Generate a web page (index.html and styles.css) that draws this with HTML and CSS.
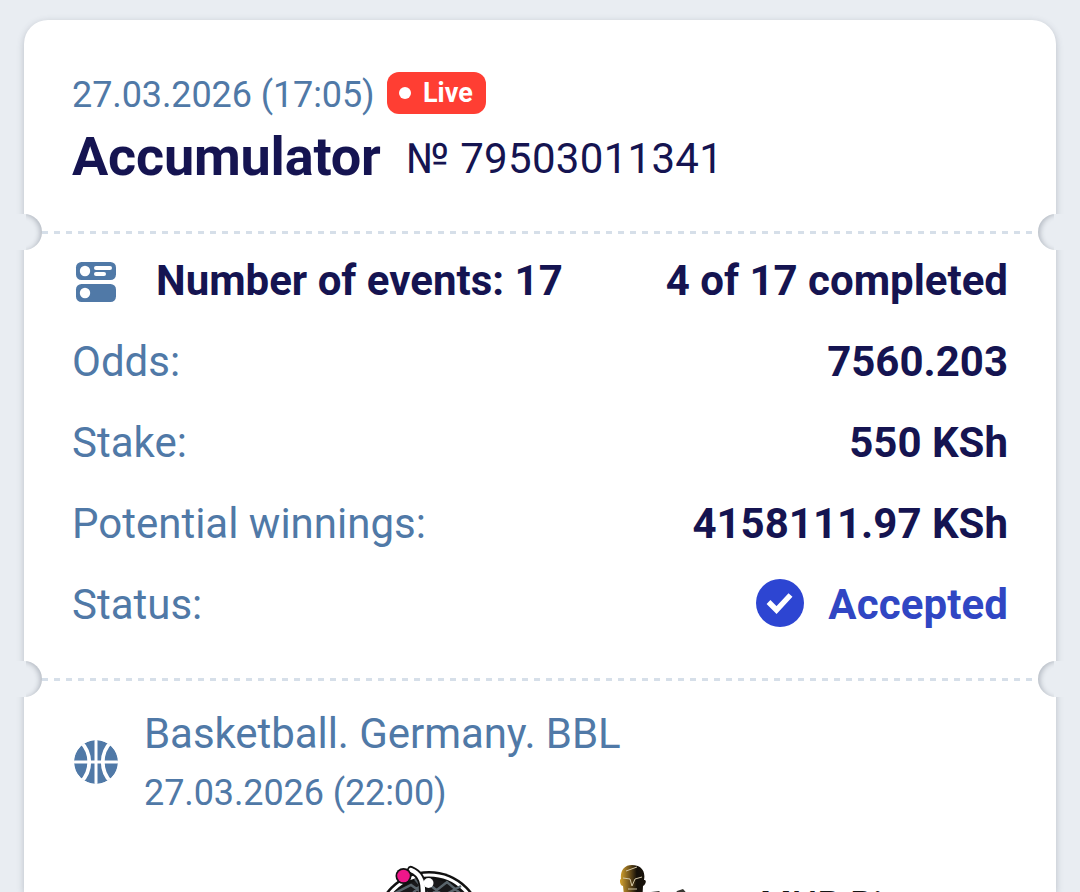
FILE: index.html
```html
<!DOCTYPE html>
<html lang="en">
<head>
<meta charset="utf-8">
<title>Bet slip</title>
<link rel="stylesheet" href="styles.css">
</head>
<body>
<main class="ticket">
  <header class="head">
    <div class="head-meta">
      <span class="date">27.03.2026 (17:05)</span>
      <span class="live"><i class="live-dot"></i><span class="live-text">Live</span></span>
    </div>
    <div class="head-title">
      <h1 class="title">Accumulator</h1>
      <span class="number">№ 79503011341</span>
    </div>
  </header>
  <div class="tear"><svg class="tear-line" width="1032" height="3"><path d="M18 1.5H1010" stroke="#d6dfe9" stroke-width="3" stroke-dasharray="6 6"/></svg><i class="notch left"></i><i class="notch right"></i></div>
  <section class="info">
    <div class="row summary">
      <svg class="events-icon" width="48" height="48" viewBox="0 0 48 48"><rect x="4" y="4" width="40" height="18" rx="5.5" fill="#5079a7"/><rect x="4" y="26" width="40" height="18" rx="5.5" fill="#5079a7"/><g fill="#fff"><circle cx="13" cy="13" r="5.2"/><circle cx="13" cy="35" r="5.2"/><rect x="22" y="8" width="18" height="4" rx="2"/><rect x="22" y="14" width="12" height="4" rx="2"/></g></svg>
      <span class="strong">Number of events: 17</span>
      <span class="value">4 of 17 completed</span>
    </div>
    <div class="row"><span class="label">Odds:</span><span class="value">7560.203</span></div>
    <div class="row"><span class="label">Stake:</span><span class="value">550 KSh</span></div>
    <div class="row"><span class="label">Potential winnings:</span><span class="value">4158111.97 KSh</span></div>
    <div class="row"><span class="label">Status:</span>
      <svg class="check" width="48" height="48" viewBox="0 0 48 48"><circle cx="24" cy="24" r="24" fill="#2d45d2"/><path d="M12.5 23L20.5 31L34.5 16" fill="none" stroke="#fff" stroke-width="5.4"/></svg>
      <span class="value accepted">Accepted</span></div>
  </section>
  <div class="tear"><svg class="tear-line" width="1032" height="3"><path d="M18 1.5H1010" stroke="#d6dfe9" stroke-width="3" stroke-dasharray="6 6"/></svg><i class="notch left"></i><i class="notch right"></i></div>
  <section class="event">
    <svg class="ball" width="48" height="48" viewBox="0 0 48 48"><defs><clipPath id="ball-clip"><circle cx="24" cy="24" r="22"/></clipPath></defs><g clip-path="url(#ball-clip)"><circle cx="24" cy="24" r="22" fill="#5079a7"/><path d="M24 0V48M0 24H48" stroke="#fff" stroke-width="3"/><path d="M9 4C20 15 20 33 9 44M39 4C28 15 28 33 39 44" fill="none" stroke="#fff" stroke-width="3.8"/></g></svg>
    <div class="event-text">
      <div class="league">Basketball. Germany. BBL</div>
      <div class="event-date">27.03.2026 (22:00)</div>
    </div>
  </section>
  <section class="teams">
    <svg class="logo-a" width="108" height="108" viewBox="0 0 108 108"><circle cx="54" cy="60" r="54" fill="#111"/><circle cx="54" cy="60" r="50" fill="none" stroke="#fff" stroke-width="3"/><circle cx="54" cy="60" r="46" fill="#19191b"/><path d="M20 28L36 20L53 32L72 17L92 34M29 37L50 16L80 40M40 14L59 36L86 21" fill="none" stroke="#59646b" stroke-width="2.5"/><path d="M36 5C46 9 50 18 47 36" fill="none" stroke="#111" stroke-width="8" stroke-linecap="round"/><path d="M36 5C46 9 50 18 47 36" fill="none" stroke="#fff" stroke-width="4.5" stroke-linecap="round"/><circle cx="28.5" cy="11" r="8" fill="#111"/><circle cx="28.5" cy="11" r="6.3" fill="#ee168a"/><circle cx="53.5" cy="18" r="5" fill="#fff"/></svg>
    <svg class="logo-b" width="100" height="108" viewBox="0 0 100 108"><defs><linearGradient id="face"><stop offset="0" stop-color="#d6a42e"/><stop offset=".35" stop-color="#76581d"/><stop offset=".65" stop-color="#151009"/><stop offset="1" stop-color="#19130b"/></linearGradient></defs><path d="M4 14C2 14 3 21 6 21L8 40H25L26 21C29 20 30 14 27 15C29 5 23 0 15 0C7 0 3 6 4 14Z" fill="url(#face)"/><path d="M6 13L13 14L15 21L18 14L25 12M11 24H20M9 6L20 2" fill="none" stroke="#d3c7a6" stroke-width="1"/><path d="M34 27L42 26L49 33H33ZM55 34L60 26L66 24L75 34ZM75 27L83 27L85 34H75Z" fill="#393833"/></svg>
    <span class="team">MHP Ri</span>
  </section>
</main>
</body>
</html>
```
FILE: styles.css
```css
* { box-sizing: border-box; }
body { margin: 0; height: 892px; overflow: hidden; padding: 20px 24px 0; background: #e9edf2; font-family: Roboto, sans-serif; color: #151451; }
.ticket { height: 872px; background: #fff; border-radius: 24px 24px 0 0; box-shadow: 0 2px 7px rgba(60,70,85,.28); white-space: nowrap; }
.head { height: 194px; padding: 50px 48px 0; }
.head-meta { display: flex; align-items: center; height: 46px; }
.date { width: 315px; font-size: 36px; line-height: 46px; letter-spacing: -.1px; color: #5079a7; padding-top: 4px; }
.live { display: flex; align-items: center; width: 99px; height: 42px; padding-left: 12px; border-radius: 12px; background: #ff3e33; color: #fff; }
.live-dot { width: 12px; height: 12px; margin-right: 12px; border-radius: 50%; background: #fff; }
.live-text { font-size: 27px; font-weight: 700; line-height: 42px; }
.head-title { display: flex; align-items: flex-start; height: 72px; padding-top: 9px; }
.title { width: 334px; margin: 0; font-size: 54px; line-height: 64px; font-weight: 700; letter-spacing: -.2px; }
.number { font-size: 42px; font-weight: 400; line-height: 50px; padding-top: 9px; letter-spacing: .3px; }
.tear { position: relative; height: 36px; display: flex; align-items: center; overflow: hidden; margin: 0 -12px; padding: 0 12px; }
.notch { position: absolute; top: 0; width: 30px; height: 36px; background: #e9edf2; }
.left { left: 0; border-radius: 0 18px 18px 0; box-shadow: inset -3px 1px 5px -1px rgba(60,70,85,.3); clip-path: inset(0); }
.right { right: 0; border-radius: 18px 0 0 18px; box-shadow: inset 3px 1px 5px -1px rgba(60,70,85,.3); }
.notch::before { content: ""; position: absolute; top: 0; width: 14px; height: 36px; background: #e9edf2; }
.left::before { left: 0; }
.right::before { right: 0; }
.info { height: 411px; padding: 0 48px; }
.row { display: flex; align-items: center; height: 81px; font-size: 42px; line-height: 50px; }
.summary { height: 71px; padding-bottom: 8px; }
.row .label { color: #5079a7; }
.strong { margin-left: 36px; font-weight: 700; }
.summary .strong, .summary .value { padding-bottom: 2px; }
.value { margin-left: auto; font-weight: 700; }
.check { margin-left: auto; margin-bottom: 4px; }
.value.accepted { margin-left: 24px; color: #3046c3; letter-spacing: .1px; }
.event { display: flex; height: 168px; padding: 9px 48px 0; color: #5079a7; }
.ball { margin-top: 32px; }
.event-text { margin-left: 24px; }
.league { height: 57px; font-size: 42px; line-height: 56px; letter-spacing: -.06px; }
.event-date { font-size: 36px; line-height: 60px; letter-spacing: -.1px; }
.teams { display: flex; align-items: flex-start; height: 27px; overflow: hidden; padding-left: 351px; color: #151515; }
.logo-b { margin-left: 134px; }
.team { margin-left: 43px; margin-top: 18px; font-size: 36px; font-weight: 500; line-height: 45px; letter-spacing: .3px; }
```
